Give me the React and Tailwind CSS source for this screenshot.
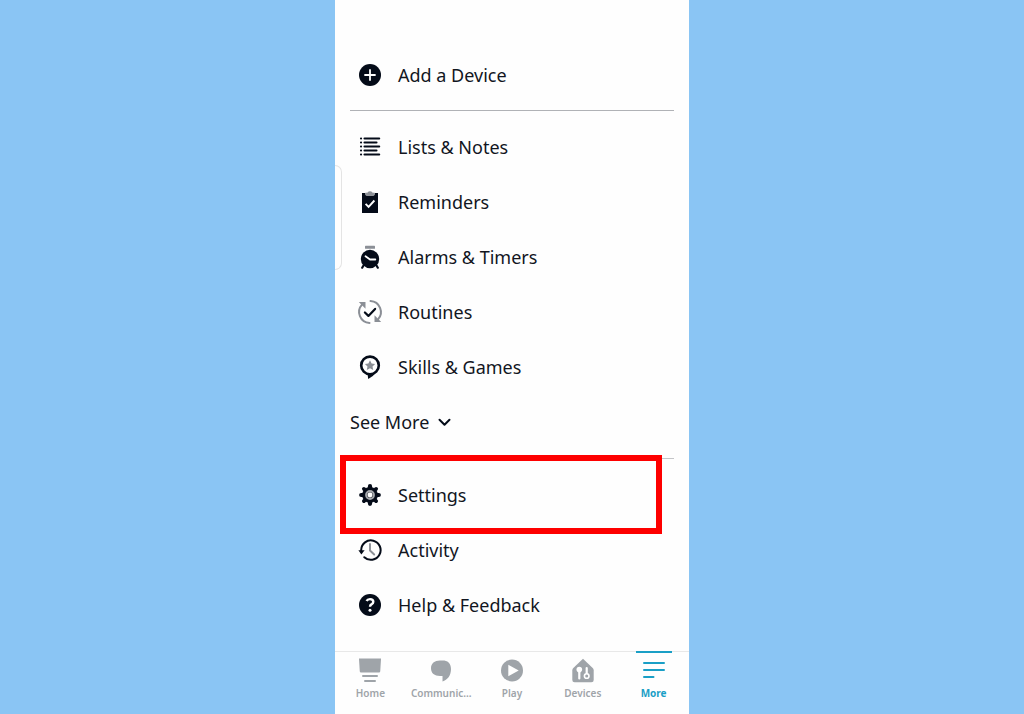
import { useState } from 'react'
import clsx from 'clsx'

const INK = '#040b18'
const GREY = '#8b8f96'

function AddIcon() {
  return (
    <svg viewBox="0 0 24 24" className="size-6" aria-hidden="true">
      <circle cx="12" cy="12" r="11" fill={INK} />
      <path d="M12 7v10M7 12h10" stroke="#fff" strokeWidth="1.8" strokeLinecap="round" />
    </svg>
  )
}

function ListIcon() {
  return (
    <svg viewBox="0 0 24 24" className="size-6" fill="none" stroke={INK} strokeWidth="2.1" strokeLinecap="round" aria-hidden="true">
      <path d="M6.500 3.500h14.700M6.500 7.500h12M6.500 11.500h14.700M6.500 15.500h12M6.500 19.500h14.700" />
      <path d="M3 3.500h.1M3 7.500h.1M3 11.500h.1M3 15.500h.1M3 19.500h.1" />
    </svg>
  )
}

function ReminderIcon() {
  return (
    <svg viewBox="0 0 24 24" className="size-6" aria-hidden="true">
      <path d="M4 3h16v20H4z" fill={INK} />
      <path d="M7.500 2.600h1.800a2.800 2.200 0 0 1 5.400 0h1.800v1.600q0 1.300-1.300 1.300H8.800q-1.300 0-1.300-1.300z" fill={GREY} stroke="#fff" strokeWidth=".4" />
      <path d="M7.600 13.800l3 3 5.800-6.300" fill="none" stroke="#fff" strokeWidth="1.900" />
    </svg>
  )
}

function AlarmIcon() {
  return (
    <svg viewBox="0 0 24 24" className="size-6" aria-hidden="true">
      <rect x="7" y=".8" width="10" height="3" rx=".6" fill={GREY} />
      <circle cx="12" cy="14" r="9.200" fill={INK} />
      <path d="M5.500 20.500l-1.300 2.200M18.500 20.500l1.300 2.200" stroke={INK} strokeWidth="2.200" strokeLinecap="round" />
      <path d="M7.500 11.200l4.500 3.300h5.300" fill="none" stroke="#fff" strokeWidth="1.800" strokeLinecap="round" strokeLinejoin="round" />
    </svg>
  )
}

function RoutineIcon() {
  return (
    <svg viewBox="0 0 24 24" className="size-6 overflow-visible" aria-hidden="true">
      <g fill="none" stroke={GREY} strokeWidth="2" strokeLinecap="round">
        <path d="M11.500 23A11 11 0 0 1 4 4.600" />
        <path d="M12.500 1A11 11 0 0 1 20 19.400" />
      </g>
      <path d="M.8 2h6.700v6.700zM23.200 22h-6.700v-6.700z" fill={GREY} />
      <path d="M6.900 12.500l3.500 3.400 6.700-7" fill="none" stroke={INK} strokeWidth="2.200" strokeLinecap="round" strokeLinejoin="round" />
    </svg>
  )
}

function SkillsIcon() {
  return (
    <svg viewBox="0 0 24 24" className="size-6" aria-hidden="true">
      <path d="M9.500 18.500l8-.5q-2.600 4-7.300 5.900z" fill={INK} />
      <circle cx="12" cy="10.400" r="8.800" fill="#fff" stroke={INK} strokeWidth="2.600" />
      <path d="M12 5.200l1.600 3.200 3.500.5-2.600 2.500.7 3.600-3.200-1.700-3.200 1.700.7-3.600-2.600-2.500 3.500-.5z" fill={GREY} />
    </svg>
  )
}

function SettingsIcon() {
  return (
    <svg viewBox="0 0 24 24" className="size-6" aria-hidden="true">
      <g stroke={INK} strokeWidth="4.200" strokeLinecap="round">
        <path d="M12 3.200v17.600M3.200 12h17.600" />
        <path d="M5.900 5.900l12.200 12.200M18.100 5.900L5.900 18.100" strokeWidth="3.800" />
      </g>
      <circle cx="12" cy="12" r="7.900" fill={INK} />
      <circle cx="12" cy="12" r="4" fill="#55595f" stroke="#a5a8ad" strokeWidth="1.800" />
      <circle cx="12" cy="12" r="2.400" fill="#fff" />
    </svg>
  )
}

function ActivityIcon() {
  return (
    <svg viewBox="0 0 24 24" className="size-6" aria-hidden="true">
      <path d="M3.200 13.500v-1.500A9.700 9.700 0 1 1 6.300 19.200" fill="none" stroke={INK} strokeWidth="2" strokeLinecap="round" />
      <path d="M.4 12.200h6.200l-3.200 4.300z" fill={INK} />
      <path d="M12 6v6.500l4.200 4" fill="none" stroke={GREY} strokeWidth="1.900" strokeLinecap="round" />
    </svg>
  )
}

function HelpIcon() {
  return (
    <svg viewBox="0 0 24 24" className="size-6" aria-hidden="true">
      <circle cx="12" cy="12" r="11" fill={INK} />
      <path d="M8.600 8q.9-1.900 3.400-1.900 3.300 0 3.300 2.700 0 1.400-1.600 2.300-1.700.9-1.700 2.600" fill="none" stroke="#fff" strokeWidth="2.400" />
      <circle cx="12" cy="17.200" r="1.500" fill="#fff" />
    </svg>
  )
}

function HomeTab() {
  return (
    <svg viewBox="0 0 24 26" className="h-6.5 w-6" fill="currentColor" aria-hidden="true">
      <path d="M1 .5h22l-.8 13q-.1 1-1.200 1H3q-1.100 0-1.200-1z" />
      <rect x="4" y="17" width="16" height="2" rx="1" />
      <rect x="6" y="22" width="12" height="2" rx="1" />
    </svg>
  )
}

function CommunicateTab() {
  return (
    <svg viewBox="0 0 24 26" className="h-6.5 w-6" fill="currentColor" aria-hidden="true">
      <path d="M11 2.500h2.500C18.500 2.500 22 5 22 11c0 6.500-3.500 11-8.500 12.500V18H11c-5.500 0-9-2.700-9-7.700s3.500-7.800 9-7.800z" />
    </svg>
  )
}

function PlayTab() {
  return (
    <svg viewBox="0 0 24 26" className="h-6.5 w-6" aria-hidden="true">
      <circle cx="12" cy="12.500" r="11" fill="currentColor" />
      <path d="M8.300 6.800v11.400l10.400-5.700z" fill="#fff" />
    </svg>
  )
}

function DevicesTab() {
  return (
    <svg viewBox="0 0 24 26" className="h-6.5 w-6" aria-hidden="true">
      <path d="M12 .8l9.700 9.300q1 1 1 2.300V22q0 2.300-2.300 2.300H3.600Q1.300 24.300 1.300 22v-9.600q0-1.300 1-2.300z" fill="currentColor" />
      <path d="M8.300 12v8.500M15.700 10v8" stroke="#fff" strokeWidth="2.200" strokeLinecap="round" />
      <circle cx="8.300" cy="11.600" r="2.800" fill="#fff" />
      <circle cx="15.700" cy="18" r="2.300" fill="currentColor" stroke="#fff" strokeWidth="1.600" />
    </svg>
  )
}

function MoreTab() {
  return (
    <svg viewBox="0 0 24 26" className="h-6.5 w-6" fill="none" stroke="currentColor" strokeWidth="2" strokeLinecap="round" aria-hidden="true">
      <path d="M2 5h20M2 12h20M2 19h9.500" />
    </svg>
  )
}

const features = [
  { label: 'Lists & Notes', Icon: ListIcon },
  { label: 'Reminders', Icon: ReminderIcon },
  { label: 'Alarms & Timers', Icon: AlarmIcon },
  { label: 'Routines', Icon: RoutineIcon },
  { label: 'Skills & Games', Icon: SkillsIcon },
]

const account = [
  { label: 'Settings', Icon: SettingsIcon, highlighted: true },
  { label: 'Activity', Icon: ActivityIcon },
  { label: 'Help & Feedback', Icon: HelpIcon },
]

const tabs = [
  { label: 'Home', Icon: HomeTab },
  { label: 'Communic...', Icon: CommunicateTab },
  { label: 'Play', Icon: PlayTab },
  { label: 'Devices', Icon: DevicesTab },
  { label: 'More', Icon: MoreTab },
]

function MenuItem({ label, Icon, highlighted }) {
  return (
    <li className="relative">
      <button type="button" className="flex h-[55px] w-full items-center gap-2 text-left">
        <span className="flex w-10 justify-center">
          <Icon />
        </span>
        {label}
      </button>
      {highlighted && (
        <span className="pointer-events-none absolute -inset-y-3 -left-2.5 right-3 border-6 border-[#fe0000]" />
      )}
    </li>
  )
}

function App() {
  const [activeTab, setActiveTab] = useState('More')

  return (
    <div className="min-h-screen bg-[#8ac5f4] font-['Noto_Sans',sans-serif] text-[#12161f]">
      <div className="relative mx-auto flex min-h-screen w-full max-w-[354px] flex-col bg-[#fefefe]">
        <span className="absolute left-0 top-[165px] h-[105px] w-[7px] rounded-r-lg border border-l-0 border-[#e4e4e4]" />

        <main className="grow px-[15px] pt-[47px] text-[18px] leading-6">
          <ul>
            <MenuItem label="Add a Device" Icon={AddIcon} />
          </ul>
          <hr className="my-2 border-[#b0b2b6]" />
          <ul>
            {features.map((item) => (
              <MenuItem key={item.label} {...item} />
            ))}
          </ul>
          <button type="button" className="flex h-[55px] w-full items-center gap-2">
            See More
            <svg viewBox="0 0 16 16" className="size-4" fill="none" stroke={INK} strokeWidth="2" strokeLinecap="round" strokeLinejoin="round" aria-hidden="true">
              <path d="M2.500 5.800l5 5 5-5" />
            </svg>
          </button>
          <hr className="mb-2 mt-[9px] border-[#c4c5c8]" />
          <ul>
            {account.map((item) => (
              <MenuItem key={item.label} {...item} />
            ))}
          </ul>
        </main>

        <nav className="flex border-t border-[#e8e8e8]">
          {tabs.map(({ label, Icon }) => {
            const active = label === activeTab
            return (
              <button
                key={label}
                type="button"
                onClick={() => setActiveTab(label)}
                className={clsx(
                  'relative flex h-[62px] flex-1 flex-col items-center gap-px pt-1.5 text-[10px] leading-4',
                  active ? 'font-bold text-[#1a9fc6]' : 'font-semibold text-[#9fa4a9]'
                )}
              >
                {active && <span className="absolute -top-px h-0.5 w-9 bg-[#1a9fc6]" />}
                <Icon />
                {label}
              </button>
            )
          })}
        </nav>
      </div>
    </div>
  )
}

export default App
